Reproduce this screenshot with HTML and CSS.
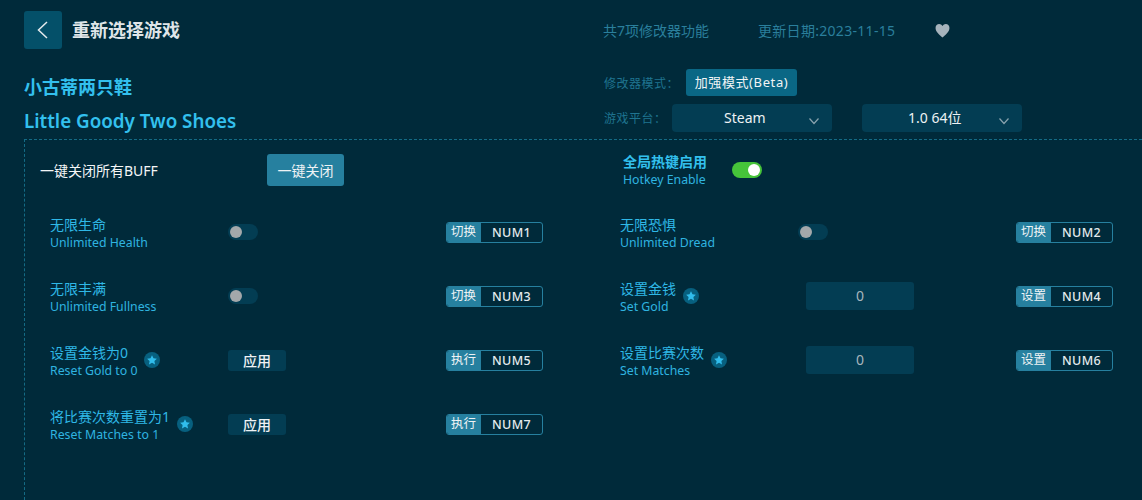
FILE: index.html
```html
<!DOCTYPE html>
<html lang="zh-CN">
<head>
<meta charset="utf-8">
<title>重新选择游戏</title>
<link rel="stylesheet" href="styles.css">
</head>
<body>
<svg class="sprite" width="0" height="0" aria-hidden="true">
  <symbol id="star" viewBox="0 0 16 16"><path d="M8 1.6l2 4.1 4.5.6-3.3 3.1.8 4.5L8 11.7l-4 2.2.8-4.5L1.5 6.3 6 5.700z"/></symbol>
  <symbol id="chev" viewBox="0 0 12 8"><path d="M1.500 1.500L6 6.500l4.500-5" fill="none" stroke="currentColor" stroke-width="1.200"/></symbol>
</svg>
<div class="app">
  <header class="top">
    <div class="top-left">
      <button class="back" type="button" aria-label="返回">
        <svg width="12" height="18" viewBox="0 0 12 18"><path d="M10 1L1.500 9l8.500 8" fill="none" stroke="#e4eaed" stroke-width="1.500"/></svg>
      </button>
      <h1 class="page-title">重新选择游戏</h1>
    </div>
    <div class="top-info">
      <span class="count">共7项修改器功能</span>
      <span class="date">更新日期:2023-11-15</span>
      <svg class="heart" width="15" height="15" viewBox="0 0 14 14"><path d="M7 13.500C5 11.700.5 8.500.5 4.600.5 2.400 2.100 1 3.900 1 5.200 1 6.300 1.700 7 2.900 7.700 1.700 8.800 1 10.100 1c1.800 0 3.400 1.400 3.400 3.600 0 3.900-4.500 7.100-6.500 8.900z"/></svg>
    </div>
  </header>

  <section class="game">
    <div class="names">
      <h2 class="name-cn">小古蒂两只鞋</h2>
      <h2 class="name-en">Little Goody Two Shoes</h2>
    </div>
    <div class="options">
      <div class="opt-row mode-row">
        <span class="opt-label">修改器模式：</span>
        <span class="mode">加强模式(Beta)</span>
      </div>
      <div class="opt-row">
        <span class="opt-label plat-label">游戏平台：</span>
        <div class="select"><span>Steam</span><svg class="chev"><use href="#chev"/></svg></div>
        <div class="select ver"><span>1.0 64位</span><svg class="chev"><use href="#chev"/></svg></div>
      </div>
    </div>
  </section>

  <main class="panel">
    <div class="master">
      <div class="master-left">
        <span class="master-text">一键关闭所有BUFF</span>
        <button class="close-all" type="button">一键关闭</button>
      </div>
      <div class="master-right">
        <div class="hotkey">
          <div class="hk-cn">全局热键启用</div>
          <div class="hk-en">Hotkey Enable</div>
        </div>
        <span class="switch on"></span>
      </div>
    </div>

    <div class="grid">
      <div class="row">
        <div class="label"><div class="cn">无限生命</div><div class="en">Unlimited Health</div></div>
        <div class="ctl"><span class="switch"></span></div>
        <div class="key"><span class="tag">切换</span><span class="num">NUM1</span></div>
      </div>
      <div class="row">
        <div class="label"><div class="cn">无限恐惧</div><div class="en">Unlimited Dread</div></div>
        <div class="ctl"><span class="switch"></span></div>
        <div class="key"><span class="tag">切换</span><span class="num">NUM2</span></div>
      </div>
      <div class="row">
        <div class="label"><div class="cn">无限丰满</div><div class="en">Unlimited Fullness</div></div>
        <div class="ctl"><span class="switch"></span></div>
        <div class="key"><span class="tag">切换</span><span class="num">NUM3</span></div>
      </div>
      <div class="row">
        <div class="label"><div class="cn">设置金钱</div><div class="en">Set Gold</div></div>
        <span class="badge"><svg><use href="#star"/></svg></span>
        <div class="ctl ctl-input"><span class="input">0</span></div>
        <div class="key"><span class="tag">设置</span><span class="num">NUM4</span></div>
      </div>
      <div class="row">
        <div class="label"><div class="cn">设置金钱为0</div><div class="en">Reset Gold to 0</div></div>
        <span class="badge"><svg><use href="#star"/></svg></span>
        <div class="ctl"><button class="apply" type="button">应用</button></div>
        <div class="key"><span class="tag">执行</span><span class="num">NUM5</span></div>
      </div>
      <div class="row">
        <div class="label"><div class="cn">设置比赛次数</div><div class="en">Set Matches</div></div>
        <span class="badge"><svg><use href="#star"/></svg></span>
        <div class="ctl ctl-input"><span class="input">0</span></div>
        <div class="key"><span class="tag">设置</span><span class="num">NUM6</span></div>
      </div>
      <div class="row">
        <div class="label"><div class="cn">将比赛次数重置为1</div><div class="en">Reset Matches to 1</div></div>
        <span class="badge"><svg><use href="#star"/></svg></span>
        <div class="ctl"><button class="apply" type="button">应用</button></div>
        <div class="key"><span class="tag">执行</span><span class="num">NUM7</span></div>
      </div>
    </div>
  </main>
</div>
</body>
</html>
```

FILE: styles.css
```css
* { box-sizing: border-box; }
html, body { margin: 0; height: 100%; }
body {
  background: #002a3a;
  font-family: "Noto Sans", "Noto Sans CJK SC", sans-serif;
  overflow: hidden;
  color: #fff;
}
.sprite { position: absolute; }
h1, h2 { margin: 0; }
button { font-family: inherit; border: 0; padding: 0; }

.app { height: 500px; display: flex; flex-direction: column; padding-left: 24px; }

.top { display: flex; height: 64px; padding-top: 11px; }
.top-left { display: flex; align-items: flex-start; width: 579px; }
.back {
  width: 38px; height: 38px; border-radius: 3px; background: #045069;
  display: flex; align-items: center; justify-content: center;
}
.page-title { margin-left: 10px; font-size: 18px; line-height: 38px; font-weight: 700; color: #dfe5e8; }
.top-info { display: flex; align-items: center; height: 38px; font-size: 14px; color: #2a7f9c; }
.count { width: 155px; }
.date { width: 177px; letter-spacing: .3px; }
.heart { fill: #a6b3bc; }

.game { display: flex; height: 75px; }
.names { width: 580px; padding-top: 11px; }
.name-cn { font-size: 18px; line-height: 24px; font-weight: 700; color: #33c0ee; }
.name-en { font-size: 18.800px; line-height: 24px; font-weight: 600; color: #33c0ee; margin-top: 10px; }
.options { display: flex; flex-direction: column; gap: 8px; margin-top: 5px; }
.opt-row { display: flex; align-items: center; height: 28px; }
.mode-row { height: 27px; }
.opt-label { font-size: 12px; color: #1f7490; width: 82px; letter-spacing: .5px; white-space: nowrap; }
.plat-label { width: 68px; }
.mode {
  width: 111px; height: 27px; text-align: center; border-radius: 3px; background: #0a6785;
  font-size: 13px; line-height: 27px; color: #f2f5f6; letter-spacing: .6px;
}
.select {
  position: relative; width: 160px; height: 28px; border-radius: 4px; background: #033d53;
  font-size: 14px; line-height: 28px; color: #eef2f4;
  display: flex; padding-left: 52px;
}
.ver { margin-left: 30px; padding-left: 46px; }
.select .chev {
  position: absolute; right: 12px; top: 13px; width: 12px; height: 8px; color: #8aa3ae;
}

.panel {
  flex: 1; margin-right: -10px;
  border-top: 1px dashed #146b85; border-left: 1px dashed #146b85;
  padding-left: 15px;
}
.master { display: flex; height: 60px; }
.master-left { display: flex; align-items: center; width: 583px; }
.master-text { width: 227px; font-size: 14px; color: #f4f6f7; white-space: nowrap; }
.close-all {
  width: 77px; height: 32px; border-radius: 3px; background: #26809f;
  font-size: 14px; color: #eef3f5;
}
.master-right { display: flex; align-items: center; }
.hotkey { width: 109px; }
.hk-cn { font-size: 14px; line-height: 18px; font-weight: 700; color: #33c0ee; }
.hk-en { font-size: 12.300px; line-height: 17px; color: #2fb4e0; }

.switch {
  position: relative; display: block; width: 30px; height: 16px; border-radius: 8px; background: #033d53;
}
.switch::after {
  content: ""; position: absolute; left: 2px; top: 2px; width: 12px; height: 12px; border-radius: 50%; background: #a3a8ab;
}
.switch.on { background: #46c43a; }
.switch.on::after { left: 16px; background: #fff; }

.grid {
  display: grid; grid-template-columns: 493px 493px; column-gap: 77px;
  grid-auto-rows: 64px; margin-left: 10px;
}
.row { position: relative; display: flex; align-items: center; height: 64px; }
.label { flex: none; padding-top: 2px; }
.cn { font-size: 14px; line-height: 18px; color: #2fb8e6; white-space: nowrap; }
.en { font-size: 12.300px; line-height: 16px; color: #2fb4e0; margin-top: 1px; white-space: nowrap; }
.badge {
  flex: none; margin-left: 7px; width: 16px; height: 16px; border-radius: 50%; background: #07607f;
  display: flex; align-items: center; justify-content: center;
}
.badge svg { width: 12px; height: 12px; fill: #31bdec; }
.ctl { position: absolute; left: 178px; top: 0; height: 64px; display: flex; align-items: center; }
.ctl-input { left: 186px; }
.input {
  display: block; width: 108px; height: 28px; border-radius: 3px; background: #033d53;
  text-align: center; font-size: 14px; line-height: 28px; color: #a7b6bd;
}
.apply {
  display: block; width: 58px; height: 21px; border-radius: 3px; background: #033d53;
  font-size: 14px; line-height: 21px; font-weight: 500; color: #eef2f4;
}
.key {
  margin-left: auto; display: flex; width: 97px; height: 21px; border: 1px solid #26809f; border-radius: 3px;
  align-items: stretch; overflow: hidden;
}
.tag {
  flex: none; width: 35px; margin: -1px 0 -1px -1px; background: #26809f;
  font-size: 12.500px; line-height: 20px; text-align: center; color: #eef3f5;
}
.num {
  flex: 1; text-align: center; font-size: 12.500px; line-height: 19px; font-weight: 500; color: #e4eaed; letter-spacing: .3px;
}
```
